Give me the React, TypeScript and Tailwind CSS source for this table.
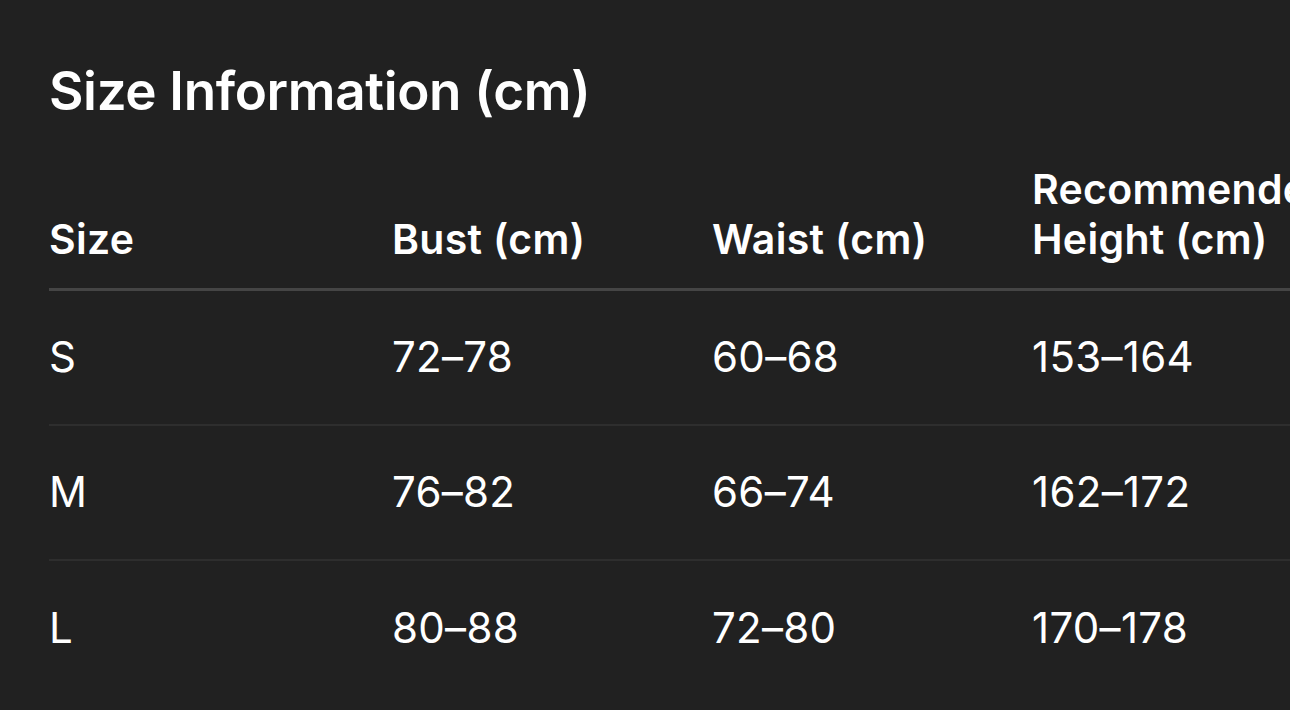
const rows = [
  { size: "S", bust: "72–78", waist: "60–68", height: "153–164" },
  { size: "M", bust: "76–82", waist: "66–74", height: "162–172" },
  { size: "L", bust: "80–88", waist: "72–80", height: "170–178" },
];

export default function App() {
  return (
    <div
      className="h-[710px] w-[1290px] overflow-hidden bg-[#212121] pl-[49px] pt-[61px] text-white"
      style={{ fontFamily: "Inter, 'Noto Sans', sans-serif" }}
    >
      <h1 className="text-[53px] font-semibold leading-[60px] tracking-[-0.35px]">
        Size Information (cm)
      </h1>

      <table className="mt-[43px] w-[1600px] table-fixed border-collapse">
        <colgroup>
          <col className="w-[343px]" />
          <col className="w-[320px]" />
          <col className="w-[320px]" />
          <col className="w-[617px]" />
        </colgroup>
        <thead>
          <tr className="border-b-[3px] border-[#454545]">
            <th className="pb-[24px] text-left align-bottom text-[41px] font-semibold leading-[50px] tracking-[0.3px]">Size</th>
            <th className="pb-[24px] text-left align-bottom text-[41px] font-semibold leading-[50px] tracking-[0.3px]">Bust (cm)</th>
            <th className="pb-[24px] text-left align-bottom text-[41px] font-semibold leading-[50px] tracking-[0.3px]">Waist (cm)</th>
            <th className="pb-[24px] text-left align-bottom text-[41px] font-semibold leading-[50px] tracking-[0.3px]">
              Recommended
              <br />
              Height (cm)
            </th>
          </tr>
        </thead>
        <tbody>
          {rows.map((r, i) => (
            <tr
              key={r.size}
              className={i < rows.length - 1 ? "h-[135px] border-b-2 border-[#2e2e2e]" : "h-[135px]"}
            >
              <td className="align-middle text-[42px] leading-[50px] tracking-[0.3px]">{r.size}</td>
              <td className="align-middle text-[42px] leading-[50px] tracking-[0.3px]">{r.bust}</td>
              <td className="align-middle text-[42px] leading-[50px] tracking-[0.3px]">{r.waist}</td>
              <td className="align-middle text-[42px] leading-[50px] tracking-[0.3px]">{r.height}</td>
            </tr>
          ))}
        </tbody>
      </table>
    </div>
  );
}
